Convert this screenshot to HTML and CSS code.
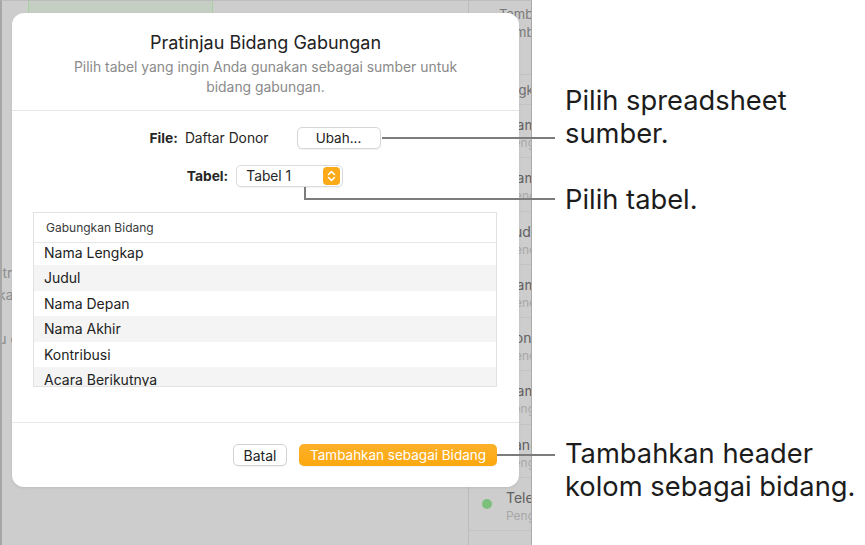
FILE: index.html
```html
<!DOCTYPE html>
<html lang="id">
<head>
<meta charset="utf-8">
<title>Pratinjau Bidang Gabungan</title>
<link rel="stylesheet" href="styles.css">
</head>
<body>
<div class="page">
  <div class="app">
    <div class="main">
      <div class="doc-strip"></div>
      <div class="bg-text">
        <p>Kontribusi</p>
        <p>Ke kantor</p>
        <p class="gap">Abu catat</p>
      </div>
    </div>
    <aside class="sidebar">
      <div class="sb-head">Tambahkan<br>Sumber data</div>
      <div class="sb-sub">Lengkapi</div>
      <div class="sb-row"><span class="t">Nama</span><span class="s">Pengguna</span></div>
      <div class="sb-row"><span class="t">Nama</span><span class="s">Generik</span></div>
      <div class="sb-row"><span class="t">Judul</span><span class="s">Generik</span></div>
      <div class="sb-row"><span class="t">Nama</span><span class="s">Generik</span></div>
      <div class="sb-row"><span class="t">Kontribusi</span><span class="s">Generik</span></div>
      <div class="sb-row"><span class="t">Nama</span><span class="s">Pengguna</span></div>
      <div class="sb-row"><span class="t">Tanggal</span><span class="s">Pengguna</span></div>
      <div class="sb-row"><i class="dot"></i><span class="t">Telepon</span><span class="s">Pengguna</span></div>
    </aside>

    <div class="dialog">
      <div class="dlg-head">
        <h1>Pratinjau Bidang Gabungan</h1>
        <p>Pilih tabel yang ingin Anda gunakan sebagai sumber untuk<br>bidang gabungan.</p>
      </div>
      <div class="dlg-body">
        <div class="form-row">
          <span class="lbl lbl-file">File:</span>
          <span class="val">Daftar Donor</span>
          <button class="btn btn-change">Ubah...</button>
        </div>
        <div class="form-row row-table">
          <span class="lbl lbl-table">Tabel:</span>
          <div class="popup">
            <span>Tabel 1</span>
            <span class="stepper">
              <svg width="18" height="18" viewBox="0 0 18 18"><path d="M5.8 7.4 9 4.4l3.2 3M5.8 10.6 9 13.6l3.2-3" fill="none" stroke="#fff" stroke-width="1.6" stroke-linecap="round" stroke-linejoin="round"/></svg>
            </span>
          </div>
        </div>
        <div class="fields">
          <div class="fields-head">Gabungkan Bidang</div>
          <div class="fields-list">
            <div class="fields-inner">
              <div class="field">Nama Lengkap</div>
              <div class="field alt">Judul</div>
              <div class="field">Nama Depan</div>
              <div class="field alt">Nama Akhir</div>
              <div class="field">Kontribusi</div>
              <div class="field alt">Acara Berikutnya</div>
            </div>
          </div>
        </div>
      </div>
      <div class="dlg-foot">
        <button class="btn btn-cancel">Batal</button>
        <button class="btn btn-primary">Tambahkan sebagai Bidang</button>
      </div>
    </div>
  </div>

  <div class="notes">
    <p class="note note-1">Pilih spreadsheet<br>sumber.</p>
    <p class="note note-2">Pilih tabel.</p>
    <p class="note note-3">Tambahkan header<br>kolom sebagai bidang.</p>
  </div>

  <div class="leader leader-1"></div>
  <div class="leader leader-2"></div>
  <div class="leader leader-3"></div>
</div>
</body>
</html>
```

FILE: styles.css
```css
* { box-sizing: border-box; }
html, body { margin: 0; padding: 0; background: #fff; }
body { font-family: Inter, "Noto Sans", "Liberation Sans", sans-serif; color: #1f1f1f; }

.page {
  position: relative;
  width: 865px;
  height: 545px;
  display: flex;
  overflow: hidden;
}

/* ---------- dimmed app in background ---------- */
.app {
  position: relative;
  width: 532px;
  height: 545px;
  flex: none;
  display: flex;
  background: #cdcdcd;
  border-left: 2px solid #a6a6a6;
  border-top: 1px solid #bdbdbd;
  border-right: 1px solid #a9a9a9;
  overflow: hidden;
}
.main { flex: 1; display: flex; flex-direction: column; }
.doc-strip {
  margin-left: 26px;
  width: 185px;
  height: 12px;
  background: #c4cec3;
  border-left: 1px solid #a6d09e;
  border-right: 1px solid #a6d09e;
}
.bg-text { margin-top: 249px; font-size: 14px; color: #8c8c8c; }
.bg-text p { margin: 0; line-height: 22px; text-indent: -25px; white-space: nowrap; }
.bg-text p.gap { margin-top: 22px; text-indent: -22px; }

.sidebar {
  width: 63px;
  flex: none;
  border-left: 1px solid #bcbcbc;
  display: flex;
  flex-direction: column;
  overflow: hidden;
  white-space: nowrap;
}
.sb-head {
  height: 74px;
  padding: 4px 0 0 30px;
  font-size: 13px;
  line-height: 18px;
  color: #7a7a7a;
  border-bottom: 1px solid #c2c2c2;
}
.sb-sub {
  height: 30px;
  padding-left: 27px;
  font-size: 13px;
  line-height: 30px;
  color: #6e6e6e;
  border-bottom: 1px solid #c2c2c2;
}
.sb-row {
  position: relative;
  height: 53.3px;
  padding: 11px 0 0 37px;
  display: flex;
  flex-direction: column;
  border-bottom: 1px solid #c4c4c4;
}
.sb-row .t { font-size: 14px; line-height: 18px; color: #606060; }
.sb-row .s { font-size: 12px; line-height: 17px; color: #a8a8a8; }
.sb-row .dot {
  position: absolute;
  left: 13px;
  top: 21px;
  width: 10px;
  height: 10px;
  border-radius: 50%;
  background: #7cc07c;
}

/* ---------- dialog ---------- */
.dialog {
  position: absolute;
  left: 10px;
  top: 12px;
  width: 507px;
  height: 474px;
  background: #fff;
  border-radius: 12px;
  box-shadow: 0 1px 3px rgba(0,0,0,0.08);
  display: flex;
  flex-direction: column;
}
.dlg-head {
  padding: 19px 20px 13px;
  text-align: center;
  border-bottom: 1px solid #e6e6e6;
}
.dlg-head h1 {
  margin: 0;
  font-size: 18px;
  line-height: 22px;
  font-weight: 400;
  color: #222;
}
.dlg-head p {
  margin: 3px 0 0;
  font-size: 13.9px;
  line-height: 20px;
  color: #8a8a8a;
}
.dlg-body {
  padding: 16px 22px 35px 21px;
  border-bottom: 1px solid #e8e8e8;
  display: flex;
  flex-direction: column;
}
.form-row {
  height: 22px;
  display: flex;
  align-items: center;
  justify-content: center;
  font-size: 13.8px;
}
.row-table { margin-top: 16px; }
.lbl { font-weight: 700; color: #262626; }
.lbl-file { margin-right: 7px; }
.lbl-table { margin-right: 8px; }
.val { margin-right: 28px; color: #262626; }

.btn {
  font-family: inherit;
  height: 22px;
  border-radius: 5px;
  background: #fff;
  border: 1px solid #d6d6d6;
  box-shadow: 0 1px 1px rgba(0,0,0,0.05);
  color: #222;
  padding: 0;
  font-size: 13.5px;
}
.btn-change { width: 84px; }

.popup {
  width: 107px;
  height: 22px;
  border: 1px solid #dcdcdc;
  border-radius: 5px;
  box-shadow: 0 1px 1px rgba(0,0,0,0.05);
  display: flex;
  align-items: center;
  justify-content: space-between;
  padding: 0 2px 0 9px;
  font-size: 13.8px;
  color: #262626;
}
.stepper {
  width: 17px;
  height: 18px;
  border-radius: 4px;
  background: #fcaa17;
  display: flex;
  align-items: center;
  justify-content: center;
}
.stepper svg { display: block; }

.fields {
  margin-top: 25px;
  height: 175px;
  border: 1px solid #e2e2e2;
  display: flex;
  flex-direction: column;
}
.fields-head {
  height: 30px;
  flex: none;
  padding-left: 12px;
  font-size: 12px;
  line-height: 29px;
  color: #3a3a3a;
  border-bottom: 1px solid #e6e6e6;
}
.fields-list { flex: 1; overflow: hidden; }
.fields-inner { margin-top: -3px; }
.field {
  height: 25.4px;
  line-height: 25.4px;
  padding-left: 10px;
  font-size: 14px;
  color: #222;
}
.field.alt { background: #f3f4f3; }

.dlg-foot {
  padding: 21px 22px 21px;
  display: flex;
  justify-content: flex-end;
  gap: 12px;
}
.btn-cancel { width: 54px; font-size: 14px; border-color: #d3d3d3; }
.btn-primary {
  width: 198px;
  font-size: 13.5px;
  border: none;
  color: #fff;
  background: linear-gradient(#fdb12a, #fca80e);
}

/* ---------- callouts ---------- */
.notes {
  flex: 1;
  padding-left: 33px;
  display: flex;
  flex-direction: column;
}
.note {
  margin: 0;
  font-size: 27.3px;
  line-height: 33px;
  color: #1c1c1c;
  white-space: nowrap;
}
.note-1 { margin-top: 84px; }
.note-2 { margin-top: 33px; }
.note-3 { margin-top: 221px; }

.leader { position: absolute; border-color: #7c7c7c; border-style: solid; border-width: 0; }
.leader-1 { left: 382px; top: 137px; width: 173px; border-top-width: 2px; }
.leader-2 { left: 304px; top: 187px; width: 251px; height: 13px; border-left-width: 2px; border-bottom-width: 2px; }
.leader-3 { left: 497px; top: 454px; width: 58px; border-top-width: 2px; }
```
